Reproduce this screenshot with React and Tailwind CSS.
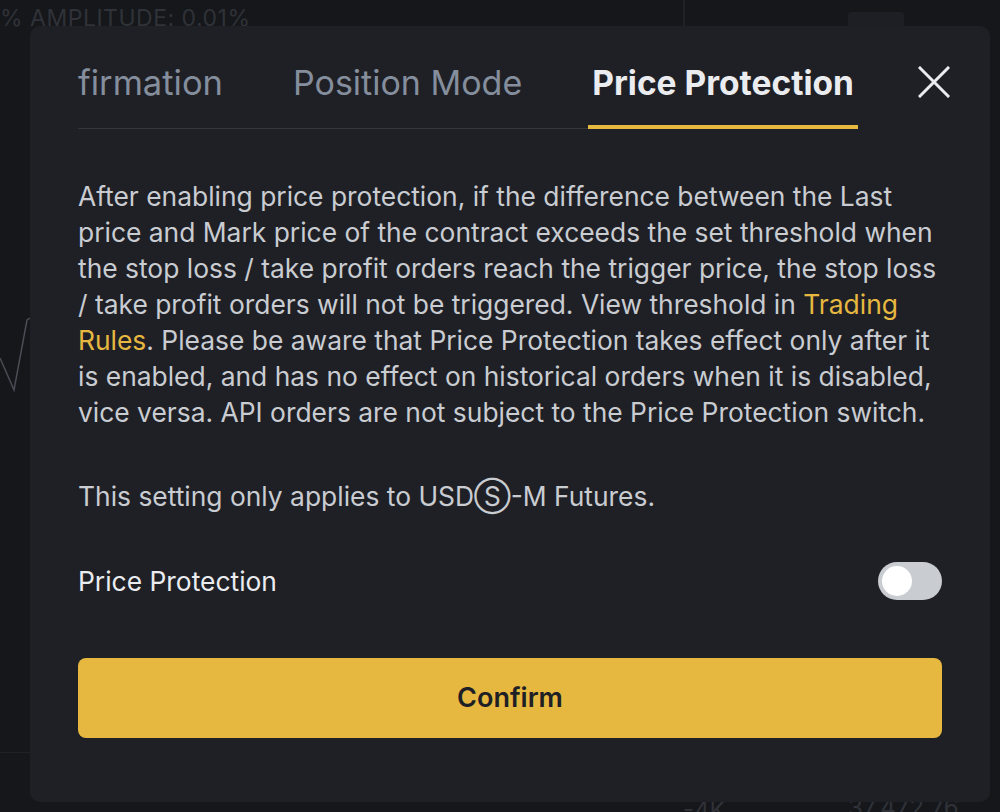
const font = { fontFamily: 'Inter, "Noto Sans", sans-serif' }

function Toggle({ on = false }) {
  return (
    <button
      className={`flex items-center w-[64px] h-[38px] rounded-full p-[4px] ${on ? 'bg-[#e6b840] justify-end' : 'bg-[#c9ccd1] justify-start'}`}
    >
      <span className="block w-[30px] h-[30px] rounded-full bg-white" />
    </button>
  )
}

function CloseIcon() {
  return (
    <svg width="32" height="32" viewBox="0 0 32 32" fill="none" stroke="#eaecef" strokeWidth="3" strokeLinecap="square">
      <path d="M2 2 L30 30 M30 2 L2 30" />
    </svg>
  )
}

export default function App() {
  return (
    <div className="relative w-[1000px] h-[812px] overflow-hidden bg-[#16171b]" style={font}>
      {/* chart remnants behind the dialog */}
      <div className="absolute left-0 top-[6px] text-[23px] leading-[24px] tracking-[0.5px] text-[#2f3238] whitespace-nowrap">
        % AMPLITUDE: 0.01%
      </div>
      <div className="absolute left-[683px] top-0 w-[2px] h-[26px] bg-[#202126]" />
      <div className="absolute left-[848px] top-[12px] w-[56px] h-[20px] rounded-[4px] bg-[#1e1f24]" />
      <svg className="absolute left-0 top-[310px]" width="30" height="90" viewBox="0 0 30 90">
        <polyline points="0,48 14,80 27,10 30,8" fill="none" stroke="#4a4d55" strokeWidth="1.5" />
      </svg>
      <div className="absolute left-0 top-[752px] w-[30px] h-px bg-[#202126]" />
      <div className="absolute left-[683px] top-[799px] text-[24px] leading-[24px] text-[#2f3238]">-4K</div>
      <div className="absolute left-[848px] top-[796px] text-[24px] leading-[24px] text-[#2f3238]">37,472.76</div>

      {/* dialog */}
      <div className="absolute left-[30px] top-[26px] w-[960px] h-[776px] rounded-[10px] bg-[#1f2026] px-[48px] flex flex-col">
        <div className="flex items-start">
          <div className="flex gap-[70px] border-b border-[#34363d] h-[103px] items-end">
            <div className="pb-[24px] text-[34.5px] leading-[42px] text-[#848e9c]">firmation</div>
            <div className="pb-[24px] text-[34px] leading-[42px] text-[#848e9c]">Position Mode</div>
            <div className="relative pb-[24px] text-[33.5px] leading-[42px] font-bold text-[#eaecef]">
              Price Protection
              <div className="absolute left-[-4px] right-[-4px] bottom-[-1px] h-[4px] bg-[#e6b840]" />
            </div>
          </div>
          <button className="ml-auto mt-[40px] mr-[-8px]">
            <CloseIcon />
          </button>
        </div>

        <p className="mt-[49px] text-[26.4px] leading-[36px] text-[#c9ccd1]">
          After enabling price protection, if the difference between the Last price and Mark price of the contract exceeds the set threshold when the stop loss / take profit orders reach the trigger price, the stop loss / take profit orders will not be triggered. View threshold in{' '}
          <a className="text-[#e6b840]">Trading Rules</a>. Please be aware that Price Protection takes effect only after it is enabled, and has no effect on historical orders when it is disabled, vice versa. API orders are not subject to the Price Protection switch.
        </p>

        <p className="mt-[48px] text-[26.4px] leading-[36px] text-[#c9ccd1]">This setting only applies to USDⓈ-M Futures.</p>

        <div className="mt-[48px] flex items-center justify-between">
          <span className="text-[26.4px] leading-[36px] text-[#eaecef]">Price Protection</span>
          <Toggle />
        </div>

        <button className="mt-[58px] h-[80px] rounded-[8px] bg-[#e6b840] text-[27px] font-semibold text-[#1e2026]">
          Confirm
        </button>
      </div>
    </div>
  )
}
